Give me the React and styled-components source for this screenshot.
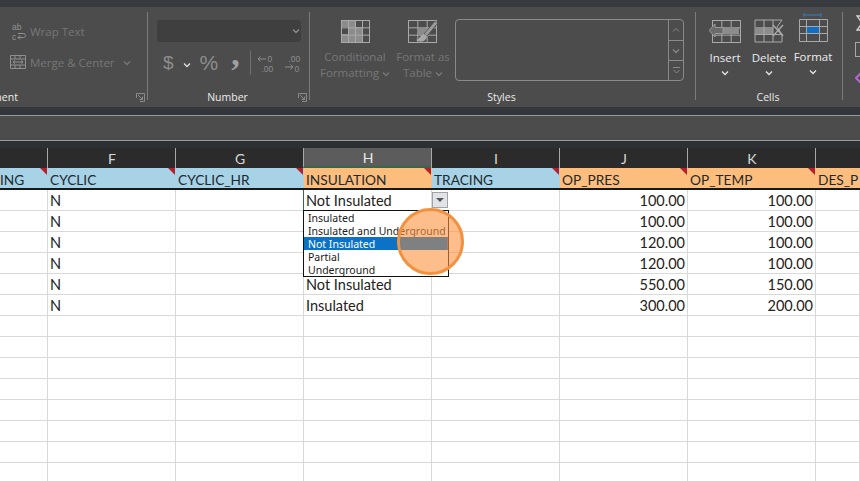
import React from 'react'
import styled, { createGlobalStyle } from 'styled-components'

const GlobalStyle = createGlobalStyle`
  html, body { margin: 0; padding: 0; background: #fff; }
  body { font-family: "Open Sans", "Noto Sans", sans-serif; }
`

const Page = styled.div`
  width: 860px;
  height: 481px;
  overflow: hidden;
  display: flex;
  flex-direction: column;
  background: #fff;
`

const TopBand = styled.div`
  height: 7px;
  background: #373a3e;
`

const Ribbon = styled.div`
  height: 100px;
  display: flex;
  background: #4c4c4c;
  overflow: hidden;
  flex-shrink: 0;
`

const Group = styled.section`
  width: ${p => p.$w}px;
  flex-shrink: 0;
  display: flex;
  flex-direction: column;
`

const GroupBody = styled.div`
  flex: 1;
  display: ${p => (p.$row ? 'flex' : 'block')};
  padding: ${p => p.$pad || '0'};
  min-height: 0;
`

const GroupFoot = styled.div`
  height: 20px;
  flex-shrink: 0;
  display: grid;
  grid-template-columns: 1fr auto 1fr;
  align-items: center;
  padding-right: 2px;
  font-size: 10.5px;
  color: #ececec;
`

const CutLabel = styled.span`
  grid-column: 1 / 3;
  margin-left: -32px;
`

const FootLabel = styled.span`
  grid-column: 2;
`

const Launcher = styled.svg`
  grid-column: 3;
  justify-self: end;
  width: 9px;
  height: 9px;
`

const Sep = styled.div`
  width: 1px;
  flex-shrink: 0;
  margin: 5px 0 7px;
  background: #7c7c7c;
`

const ToolRow = styled.div`
  display: flex;
  align-items: center;
  height: 16px;
  margin: ${p => p.$m || '0'};
  font-size: 11.5px;
  color: #777;
`

const ToolText = styled.span`
  margin-left: ${p => p.$ml || 0}px;
  white-space: nowrap;
`

const FormatSelect = styled.div`
  height: 22px;
  border-radius: 3px;
  background: #3f3f3f;
  display: flex;
  align-items: center;
  justify-content: flex-end;
  padding-right: 1px;
`

const NumberRow = styled.div`
  display: flex;
  align-items: center;
  height: 24px;
  margin: 9px 0 0 6px;
  color: #8d8d8d;
`

const Glyph = styled.span`
  font-size: ${p => p.$size || 18}px;
  font-family: "Liberation Sans", sans-serif;
  margin-left: ${p => p.$ml || 0}px;
  line-height: 24px;
`

const CommaGlyph = styled.span`
  width: 10px;
  margin-left: 13px;
  color: #a0a0a0;
  font-family: "Liberation Serif", serif;
  font-size: 34px;
  font-weight: 700;
  line-height: 24px;
  transform: translateY(-9px);
`

const NumberDivider = styled.div`
  width: 1px;
  height: 24px;
  margin: 0 6px 0 9px;
  background: #707070;
`

const DecimalIcon = styled.svg`
  width: 17px;
  height: 18px;
  flex-shrink: 0;
  margin-left: ${p => p.$ml || 0}px;
`

const LargeButton = styled.div`
  width: ${p => p.$w}px;
  margin-left: ${p => p.$ml || 0}px;
  flex-shrink: 0;
  display: flex;
  flex-direction: column;
  align-items: center;
  font-size: 11.5px;
  line-height: 16px;
  text-align: center;
  white-space: nowrap;
  color: ${p => (p.$on ? '#ececec' : '#777')};
`

const LargeIcon = styled.svg`
  width: 32px;
  height: ${p => p.$h || 24}px;
  flex-shrink: 0;
  margin-top: ${p => p.$top || 0}px;
  margin-bottom: ${p => p.$gap || 6}px;
`

const ButtonArrow = styled.div`
  display: flex;
  margin-top: 3px;
`

const Caret = styled.span`
  display: inline-flex;
  vertical-align: -1px;
`

const Gallery = styled.div`
  width: 229px;
  height: 62px;
  margin-left: 7px;
  box-sizing: border-box;
  border: 1px solid #8a8a8a;
  border-radius: 4px;
  display: flex;
  justify-content: flex-end;
`

const GalleryScroll = styled.div`
  width: 14px;
  border-left: 1px solid #8a8a8a;
  display: grid;
  grid-template-rows: repeat(3, 1fr);
`

const ScrollCell = styled.div`
  display: flex;
  align-items: center;
  justify-content: center;
  & + & { border-top: 1px solid #8a8a8a; }
`

const EdgeIcons = styled.div`
  display: flex;
  flex-direction: column;
  padding: 8px 0 0 12px;
`

const EdgeIcon = styled.svg`
  flex-shrink: 0;
  width: 14px;
  height: ${p => p.$h}px;
  margin-top: ${p => p.$top || 0}px;
`

const DarkBand = styled.div`
  height: 8px;
  background: #33363a;
`

const FormulaBar = styled.div`
  height: 24px;
  background: #4c4c4c;
  border-top: 1px solid #9a9a9a;
  border-bottom: 1px solid #9a9a9a;
`

const Sheet = styled.div`
  flex: 1;
  min-height: 0;
  display: flex;
  flex-direction: column;
`

const SheetRow = styled.div`
  display: grid;
  grid-template-columns: 48px repeat(6, 128px) 44px;
  flex-shrink: 0;
`

const HeadRow = styled(SheetRow)`
  padding-top: 7px;
  background: #2d3033;
`

const HeadCell = styled.div`
  height: 20px;
  box-sizing: border-box;
  display: flex;
  align-items: center;
  justify-content: center;
  margin-left: -1px;
  border-left: 1px solid ${p => (p.$first ? 'transparent' : '#a8a8a8')};
  background: ${p => (p.$on ? '#5c5c5c' : '#2b2b2b')};
  border-bottom: ${p => (p.$on ? '2px solid #2f6b4a' : '0')};
  color: ${p => (p.$on ? '#e8e8e8' : '#d8d8d8')};
  font-family: "Lato", sans-serif;
  font-size: 14px;
`

const FieldCell = styled.div`
  position: relative;
  height: 22px;
  box-sizing: border-box;
  padding: 2px 0 0 ${p => (p.$flush ? 0 : 2)}px;
  overflow: hidden;
  white-space: nowrap;
  border-bottom: 2px solid #16191a;
  background: ${p => (p.$tone === 'orange' ? '#fdbd7c' : '#a8d3e6')};
  color: #1d2a30;
  font-family: "Lato", sans-serif;
  font-size: 13.7px;
  line-height: 20px;
  &::after {
    content: '';
    position: absolute;
    top: 0;
    right: 1px;
    border-top: 7px solid #b3202c;
    border-left: 7px solid transparent;
    display: ${p => (p.$mark ? 'block' : 'none')};
  }
`

const Cell = styled.div`
  position: ${p => (p.$active ? 'relative' : 'static')};
  z-index: ${p => (p.$active ? 5 : 'auto')};
  height: 21px;
  box-sizing: border-box;
  padding: 0 2px;
  border-right: 1px solid #d9d9d9;
  border-bottom: 1px solid #d9d9d9;
  box-shadow: ${p => (p.$active ? '-1px 0 #2f6b4a' : 'none')};
  color: #222;
  font-family: "Lato", sans-serif;
  font-size: 14.5px;
  font-weight: 400;
  line-height: 21px;
  text-align: ${p => (p.$num ? 'right' : 'left')};
  white-space: nowrap;
`

const DropButton = styled.div`
  position: absolute;
  left: 128px;
  top: 2px;
  width: 16px;
  height: 16px;
  box-sizing: border-box;
  border: 1px solid #a3a3a3;
  background: #e0e4e9;
  display: flex;
  align-items: center;
  justify-content: center;
  &::before {
    content: '';
    border-top: 4px solid #555;
    border-left: 4px solid transparent;
    border-right: 4px solid transparent;
  }
`

const DropList = styled.div`
  position: absolute;
  left: -1px;
  top: 20px;
  width: 146px;
  box-sizing: border-box;
  border: 1px solid #111;
  background: #fff;
`

const DropItem = styled.div`
  height: 13px;
  padding-left: 4px;
  overflow: hidden;
  white-space: nowrap;
  background: ${p => (p.$on ? '#0b72c6' : 'transparent')};
  color: ${p => (p.$on ? '#fff' : '#1a1a1a')};
  font-family: "Noto Sans", sans-serif;
  font-size: 10.5px;
  line-height: 15px;
`

const Spotlight = styled.div`
  position: absolute;
  left: 93px;
  top: 18px;
  width: 67px;
  height: 67px;
  box-sizing: border-box;
  overflow: hidden;
  border: 3px solid #f2923f;
  border-radius: 50%;
  background: rgba(252, 147, 63, 0.6);
`

const SpotBar = styled.div`
  position: absolute;
  left: 0;
  top: 26px;
  width: 47px;
  height: 13px;
  background: #7e8082;
`

const stroke = '#a9a9a9'

const TableGrid = ({ x = 1, y = 1, w = 28, h = 22, cols = 3, rows = 3, color = stroke }) => (
  <g stroke={color} strokeWidth="1" fill="none">
    <rect x={x + 0.5} y={y + 0.5} width={w} height={h} />
    {Array.from({ length: cols - 1 }, (_, i) => {
      const lx = x + 0.5 + ((i + 1) * w) / cols
      return <line key={i} x1={lx} x2={lx} y1={y} y2={y + h} />
    })}
    {Array.from({ length: rows - 1 }, (_, i) => {
      const ly = y + 0.5 + ((i + 1) * h) / rows
      return <line key={i} x1={x} x2={x + w} y1={ly} y2={ly} />
    })}
  </g>
)

const Chevron = ({ color = '#b5b5b5', size = 8 }) => (
  <svg width={size} height={size} viewBox="0 0 8 8">
    <path d="M1 2.5 4 5.5 7 2.5" fill="none" stroke={color} strokeWidth="1.3" />
  </svg>
)

const LauncherIcon = () => (
  <Launcher viewBox="0 0 9 9">
    <path d="M.5 5V.5H8.5M4 .5H8.5V8.5H4" fill="none" stroke="#8a8a8a" />
    <path d="M2 2 6.5 6.5M6.5 3.5V6.5H3.5" fill="none" stroke="#8a8a8a" />
  </Launcher>
)

const columns = ['', 'F', 'G', 'H', 'I', 'J', 'K', '']

const fields = [
  { label: 'ING', tone: 'blue', mark: true, flush: true },
  { label: 'CYCLIC', tone: 'blue', mark: true },
  { label: 'CYCLIC_HR', tone: 'blue', mark: true },
  { label: 'INSULATION', tone: 'orange', mark: true },
  { label: 'TRACING', tone: 'blue', mark: true },
  { label: 'OP_PRES', tone: 'orange', mark: true },
  { label: 'OP_TEMP', tone: 'orange', mark: true },
  { label: 'DES_P', tone: 'orange' },
]

const rows = [
  ['N', 'Not Insulated', '100.00', '100.00'],
  ['N', '', '100.00', '100.00'],
  ['N', '', '120.00', '100.00'],
  ['N', '', '120.00', '100.00'],
  ['N', 'Not Insulated', '550.00', '150.00'],
  ['N', 'Insulated', '300.00', '200.00'],
  ...Array.from({ length: 8 }, () => ['', '', '', '']),
]

const options = ['Insulated', 'Insulated and Underground', 'Not Insulated', 'Partial', 'Underground']

function AlignmentGroup() {
  return (
    <Group $w={147}>
      <GroupBody $pad="16px 0 0 10px">
        <ToolRow>
          <svg width="17" height="17" viewBox="0 0 17 17">
            <text x="2" y="7" fontSize="8.5" fill="#929292" fontFamily="Liberation Sans">ab</text>
            <text x="2" y="16.5" fontSize="8.5" fill="#929292" fontFamily="Liberation Sans">c</text>
            <path d="M8 10.5H13.5C16 10.5 16 14.5 13.5 14.5H8M10 12.5 8 14.5 10 16.5" fill="none" stroke="#929292" />
          </svg>
          <ToolText $ml={3}>Wrap Text</ToolText>
        </ToolRow>
        <ToolRow $m="15px 0 0">
          <svg width="16" height="16" viewBox="0 0 16 16">
            <path d="M.5 1.5H15.5V14.5H.5ZM.5 5H15.5M.5 11H15.5M5 1.5V5M10 1.5V5M5 11V14.5M10 11V14.5" fill="none" stroke="#8f8f8f" />
            <path d="M3 8H13M5 6.5 3 8 5 9.5M11 6.5 13 8 11 9.5" fill="none" stroke="#8f8f8f" />
          </svg>
          <ToolText $ml={4}>Merge &amp; Center</ToolText>
          <ToolText $ml={8}><Chevron color="#777" /></ToolText>
        </ToolRow>
      </GroupBody>
      <GroupFoot>
        <CutLabel>Alignment</CutLabel>
        <LauncherIcon />
      </GroupFoot>
    </Group>
  )
}

function NumberGroup() {
  return (
    <Group $w={161}>
      <GroupBody $pad="13px 8px 0 9px">
        <FormatSelect>
          <Chevron color="#8d8d8d" />
        </FormatSelect>
        <NumberRow>
          <Glyph $size={19}>$</Glyph>
          <Glyph $ml={9}><Chevron color="#e0e0e0" /></Glyph>
          <Glyph $size={21} $ml={9}>%</Glyph>
          <CommaGlyph>,</CommaGlyph>
          <NumberDivider />
          <DecimalIcon viewBox="0 0 17 18">
            <text x="10.5" y="7.5" fontSize="8.5" fill="#8d8d8d" fontFamily="Liberation Sans">0</text>
            <text x="4.5" y="17.5" fontSize="8.5" fill="#8d8d8d" fontFamily="Liberation Sans">.00</text>
            <path d="M9 5H1M3.5 2.5 1 5 3.5 7.5" fill="none" stroke="#8d8d8d" />
          </DecimalIcon>
          <DecimalIcon $ml={10} viewBox="0 0 17 18">
            <text x="4.5" y="7.5" fontSize="8.5" fill="#8d8d8d" fontFamily="Liberation Sans">.00</text>
            <text x="10.5" y="17.5" fontSize="8.5" fill="#8d8d8d" fontFamily="Liberation Sans">0</text>
            <path d="M1 13H9M6.5 10.5 9 13 6.5 15.5" fill="none" stroke="#8d8d8d" />
          </DecimalIcon>
        </NumberRow>
      </GroupBody>
      <GroupFoot>
        <FootLabel>Number</FootLabel>
        <LauncherIcon />
      </GroupFoot>
    </Group>
  )
}

function StylesGroup() {
  return (
    <Group $w={385}>
      <GroupBody $row $pad="12px 0 0 10px">
        <LargeButton $w={70}>
          <LargeIcon viewBox="0 0 32 24">
            <path d="M2 1H16V8H2ZM16 8H23V15H16ZM2 15H23V23H2ZM9 8H16V15H9Z" fill="#8c8c8c" />
            <TableGrid x={2} y={1} w={28} h={22} cols={4} />
          </LargeIcon>
          <span>Conditional</span>
          <span>Formatting <Caret><Chevron color="#777" /></Caret></span>
        </LargeButton>
        <LargeButton $w={50} $ml={8}>
          <LargeIcon viewBox="0 0 32 24">
            <TableGrid x={1} y={1} w={28} h={22} cols={3} />
            <path d="M11 9H20V16H11Z" fill="#8c8c8c" />
            <path d="M31 4 20 17 17 15 28 2Z" fill="#9a9a9a" stroke="#4c4c4c" strokeWidth=".8" />
            <path d="M17 15C13 16 13 20 9 21 14 24 19 23 20 17Z" fill="#a9a9a9" />
          </LargeIcon>
          <span>Format as</span>
          <span>Table <Caret><Chevron color="#777" /></Caret></span>
        </LargeButton>
        <Gallery>
          <GalleryScroll>
            <ScrollCell><svg width="8" height="8" viewBox="0 0 8 8"><path d="M1 5.5 4 2.5 7 5.5" fill="none" stroke="#888" /></svg></ScrollCell>
            <ScrollCell><Chevron color="#888" /></ScrollCell>
            <ScrollCell><svg width="9" height="9" viewBox="0 0 9 9"><path d="M1 1.5H8M1.5 4 4.5 7 7.5 4" fill="none" stroke="#888" /></svg></ScrollCell>
          </GalleryScroll>
        </Gallery>
      </GroupBody>
      <GroupFoot>
        <FootLabel>Styles</FootLabel>
      </GroupFoot>
    </Group>
  )
}

function CellsGroup() {
  return (
    <Group $w={146}>
      <GroupBody $row $pad="12px 0 0 7px">
        <LargeButton $w={44} $on>
          <LargeIcon $gap={7} viewBox="0 0 32 24">
            <TableGrid x={3} y={1} w={28} h={22} />
            <path d="M14 8H30V15H14Z" fill="#8c8c8c" />
            <path d="M14 8.5H6V5L0 11.5 6 18V14.5H14Z" fill="#6a6a6a" stroke="#9a9a9a" />
          </LargeIcon>
          <span>Insert</span>
          <ButtonArrow><Chevron color="#e6e6e6" /></ButtonArrow>
        </LargeButton>
        <LargeButton $w={44} $on>
          <LargeIcon $gap={7} viewBox="0 0 32 24">
            <path d="M2 1H29L24 8 29 15 29 23H2Z" fill="none" stroke={stroke} />
            <path d="M2 8H20V15H2Z" fill="#8c8c8c" />
            <path d="M11 1V23M20 1V23M2 15.5H30" stroke={stroke} fill="none" />
            <path d="M20 6 30 17M30 6 20 17" stroke="#a9a9a9" strokeWidth="1.4" fill="none" />
          </LargeIcon>
          <span>Delete</span>
          <ButtonArrow><Chevron color="#e6e6e6" /></ButtonArrow>
        </LargeButton>
        <LargeButton $w={44} $on>
          <LargeIcon $h={30} $top={-7} $gap={7} viewBox="0 0 32 30">
            <path d="M7 1V5M24 1V5M7 3H24" stroke="#2c80c9" fill="none" />
            <rect x="9.5" y="14.5" width="13" height="7" fill="#0f6fc6" />
            <path d="M2.5 7.5H30.5V29.5H2.5ZM2.5 14.5H30.5M2.5 21.5H30.5M9.5 7.5V29.5M22.5 7.5V29.5" fill="none" stroke={stroke} />
          </LargeIcon>
          <span>Format</span>
          <ButtonArrow><Chevron color="#e6e6e6" /></ButtonArrow>
        </LargeButton>
      </GroupBody>
      <GroupFoot>
        <FootLabel>Cells</FootLabel>
      </GroupFoot>
    </Group>
  )
}

function EdgeGroup() {
  return (
    <EdgeIcons>
      <EdgeIcon $h={16} viewBox="0 0 14 16">
        <path d="M11 1H2L7 8 2 15H11" fill="none" stroke="#d8d8d8" strokeWidth="1.3" />
      </EdgeIcon>
      <EdgeIcon $h={15} $top={11} viewBox="0 0 14 15">
        <rect x=".5" y=".5" width="13" height="14" fill="none" stroke="#a8a8a8" />
      </EdgeIcon>
      <EdgeIcon $h={14} $top={14} viewBox="0 0 14 14">
        <path d="M7 1 13 7 7 13 1 7Z" fill="none" stroke="#b566cf" strokeWidth="2" />
      </EdgeIcon>
    </EdgeIcons>
  )
}

function InsulationCell({ value }) {
  return (
    <Cell $active>
      {value}
      <DropButton />
      <DropList>
        {options.map(o => (
          <DropItem key={o} $on={o === 'Not Insulated'}>{o}</DropItem>
        ))}
      </DropList>
      <Spotlight>
        <SpotBar />
      </Spotlight>
    </Cell>
  )
}

export default function App() {
  return (
    <Page>
      <GlobalStyle />
      <TopBand />
      <Ribbon>
        <AlignmentGroup />
        <Sep />
        <NumberGroup />
        <Sep />
        <StylesGroup />
        <Sep />
        <CellsGroup />
        <Sep />
        <EdgeGroup />
      </Ribbon>
      <DarkBand />
      <FormulaBar />
      <Sheet>
        <HeadRow>
          {columns.map((c, i) => (
            <HeadCell key={i} $first={i === 0} $on={c === 'H'}>{c}</HeadCell>
          ))}
        </HeadRow>
        <SheetRow>
          {fields.map(f => (
            <FieldCell key={f.label} $tone={f.tone} $mark={f.mark} $flush={f.flush}>{f.label}</FieldCell>
          ))}
        </SheetRow>
        {rows.map((r, i) => (
          <SheetRow key={i}>
            <Cell />
            <Cell>{r[0]}</Cell>
            <Cell />
            {i === 0 ? <InsulationCell value={r[1]} /> : <Cell>{r[1]}</Cell>}
            <Cell />
            <Cell $num>{r[2]}</Cell>
            <Cell $num>{r[3]}</Cell>
            <Cell />
          </SheetRow>
        ))}
      </Sheet>
    </Page>
  )
}
